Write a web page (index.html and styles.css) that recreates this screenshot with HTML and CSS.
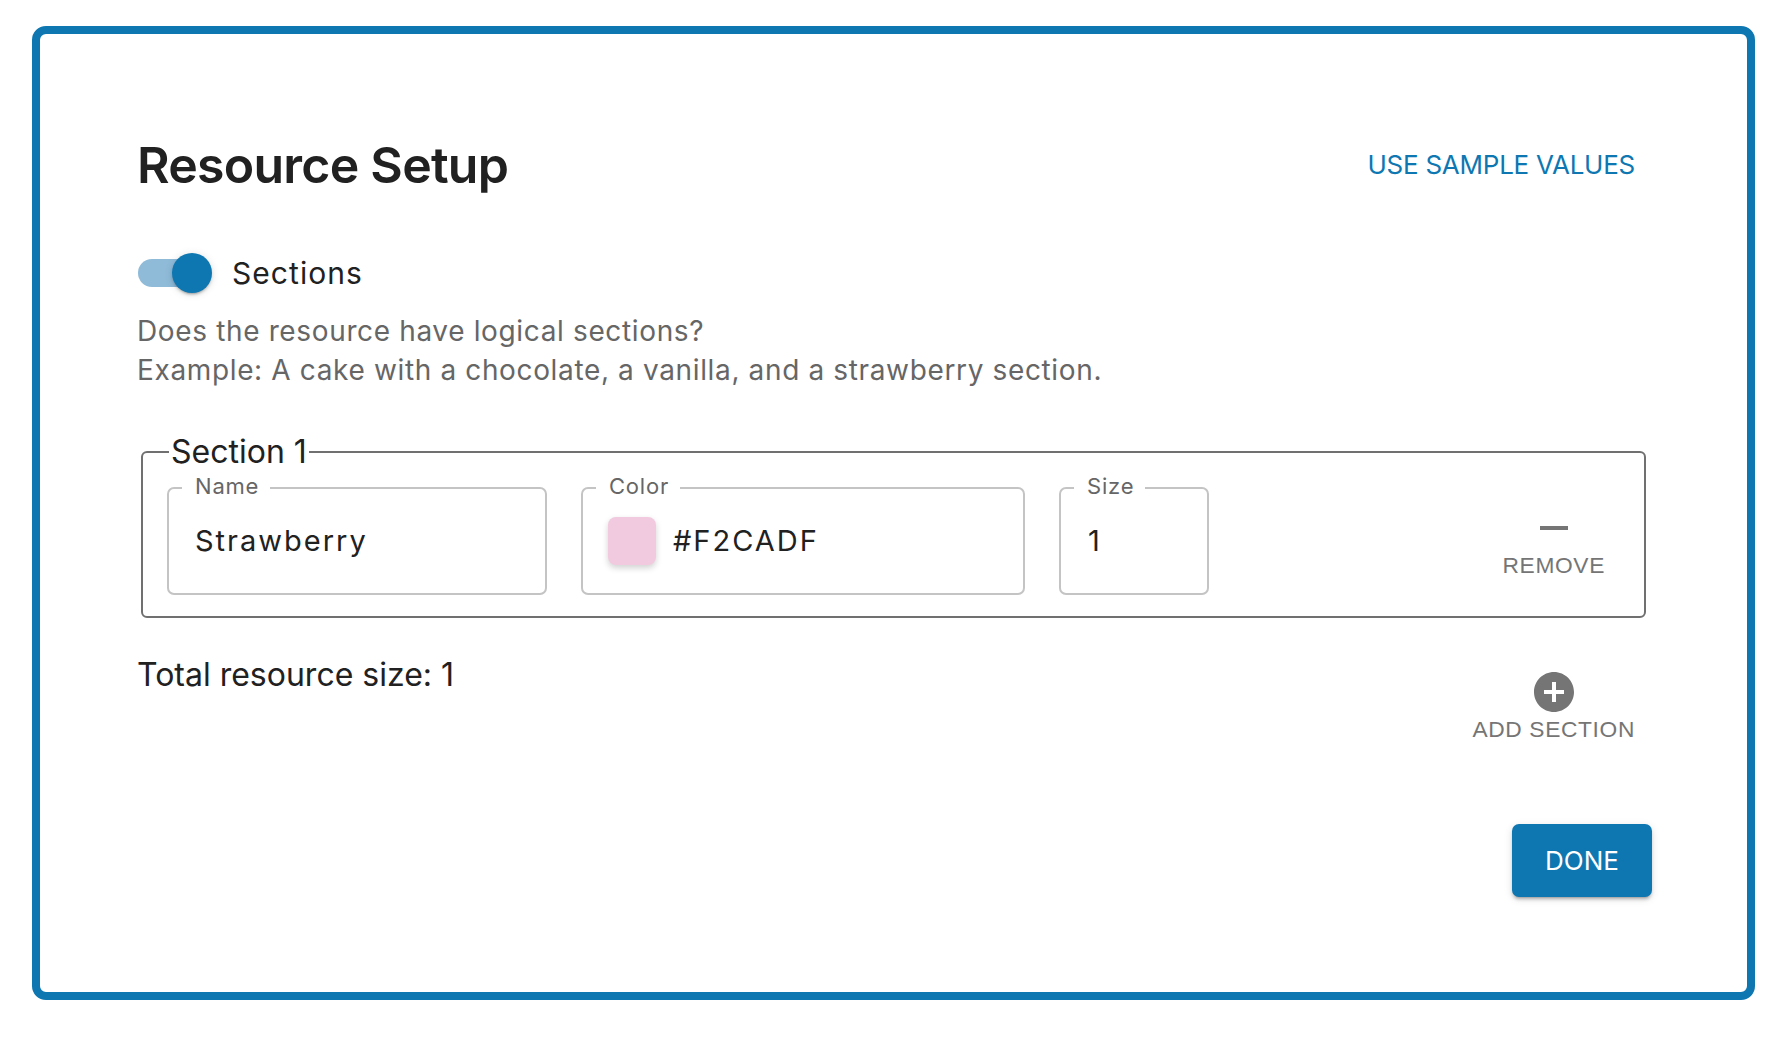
FILE: index.html
```html
<!DOCTYPE html>
<html lang="en">
<head>
<meta charset="utf-8">
<title>Resource Setup</title>
<link rel="stylesheet" href="styles.css">
</head>
<body>
<div class="card">
  <div class="header">
    <h1 class="title">Resource Setup</h1>
    <button class="link-btn" type="button">USE SAMPLE VALUES</button>
  </div>

  <div class="toggle-row">
    <span class="switch"><span class="track"></span><span class="thumb"></span></span>
    <span class="toggle-label">Sections</span>
  </div>

  <div class="desc">
    <p>Does the resource have logical sections?</p>
    <p>Example: A cake with a chocolate, a vanilla, and a strawberry section.</p>
  </div>

  <fieldset class="section">
    <legend>Section 1</legend>
    <div class="fields">
      <div class="field field-name">
        <span class="field-label">Name</span>
        <span class="field-value">Strawberry</span>
      </div>
      <div class="field field-color">
        <span class="field-label">Color</span>
        <span class="swatch"></span>
        <span class="field-value">#F2CADF</span>
      </div>
      <div class="field field-size">
        <span class="field-label">Size</span>
        <span class="field-value">1</span>
      </div>
      <button class="icon-btn remove-btn" type="button">
        <svg viewBox="0 0 24 24" aria-hidden="true"><path d="M19 13H5v-2h14v2z"/></svg>
        <span>REMOVE</span>
      </button>
    </div>
  </fieldset>

  <div class="summary-row">
    <div class="total">Total resource size: 1</div>
    <button class="icon-btn add-btn" type="button">
      <svg viewBox="0 0 24 24" aria-hidden="true"><path d="M12 2C6.48 2 2 6.48 2 12s4.48 10 10 10 10-4.48 10-10S17.520 2 12 2zm5 11h-4v4h-2v-4H7v-2h4V7h2v4h4v2z"/></svg>
      <span>ADD SECTION</span>
    </button>
  </div>

  <div class="actions">
    <button class="done-btn" type="button">DONE</button>
  </div>
</div>
</body>
</html>
```

FILE: styles.css
```css
html, body {
  margin: 0;
  background: #ffffff;
}

body {
  font-family: Inter, "Noto Sans", sans-serif;
  color: #212121;
}

button {
  font-family: inherit;
  background: none;
  border: 0;
  padding: 0;
  margin: 0;
  cursor: pointer;
}

.card {
  box-sizing: border-box;
  height: 974px;
  margin: 26px 31px 0 32px;
  border: 8px solid #0e77b1;
  border-radius: 14px;
  padding: 101px 95px 0 97px;
  background: #ffffff;
}

.header {
  display: flex;
  justify-content: space-between;
  align-items: center;
  height: 60px;
  padding-right: 17px;
}

.title {
  margin: 0;
  font-size: 50px;
  font-weight: 600;
  line-height: 60px;
  letter-spacing: -0.75px;
  color: #212121;
}

.link-btn {
  font-size: 26px;
  font-weight: 400;
  line-height: 32px;
  letter-spacing: -0.25px;
  color: #0e77b1;
}

.toggle-row {
  display: flex;
  align-items: center;
  gap: 20px;
  height: 40px;
  margin-top: 58px;
  padding-left: 1px;
}

.switch {
  position: relative;
  flex: none;
  width: 74px;
  height: 40px;
}

.track {
  position: absolute;
  left: 0;
  top: 6px;
  width: 68px;
  height: 28px;
  border-radius: 14px;
  background: #8fbbd9;
}

.thumb {
  position: absolute;
  right: 0;
  top: 0;
  width: 40px;
  height: 40px;
  border-radius: 50%;
  background: #0e77b1;
  box-shadow: 0 3px 2px -2px rgba(0, 0, 0, 0.2), 0 2px 3px rgba(0, 0, 0, 0.14), 0 1px 8px rgba(0, 0, 0, 0.12);
}

.toggle-label {
  font-size: 30px;
  line-height: 40px;
  letter-spacing: 1.05px;
  color: #212121;
}

.desc {
  margin-top: 19px;
  font-size: 28px;
  line-height: 39px;
  letter-spacing: 0.64px;
  color: #666666;
}

.desc p {
  margin: 0;
}

.section {
  min-width: 0;
  margin: 43px 6px 0 4px;
  padding: 16px 27px 21px 24px;
  border: 2px solid #707070;
  border-radius: 6px;
}

.section legend {
  margin-left: 2px;
  padding: 0 2px;
  font-size: 32px;
  line-height: 38px;
  color: #212121;
}

.fields {
  display: flex;
  align-items: center;
  gap: 34px;
}

.field {
  position: relative;
  box-sizing: border-box;
  flex: none;
  display: flex;
  align-items: center;
  height: 108px;
  padding-left: 26px;
  border: 2px solid #c4c4c4;
  border-radius: 7px;
}

.field-name { width: 380px; }
.field-color { width: 444px; padding-left: 25px; }
.field-size { width: 150px; padding-left: 27px; }

.field-label {
  position: absolute;
  left: 13px;
  top: -16px;
  padding: 0 11px 0 13px;
  background: #ffffff;
  font-size: 22px;
  line-height: 26px;
  letter-spacing: 0.8px;
  color: #666666;
}

.field-value {
  font-size: 29px;
  line-height: 34px;
  letter-spacing: 2px;
  color: #212121;
}

.swatch {
  flex: none;
  width: 48px;
  height: 48px;
  margin-right: 17px;
  border-radius: 8px;
  background: #f2cadf;
  box-shadow: 0 3px 6px rgba(0, 0, 0, 0.18);
}

.icon-btn {
  display: flex;
  flex-direction: column;
  align-items: center;
  font-family: "Liberation Sans", Arial, sans-serif;
  font-size: 22.75px;
  line-height: 26px;
  letter-spacing: 0.65px;
  color: #757575;
}

.icon-btn svg {
  display: block;
  width: 48px;
  height: 48px;
  fill: #757575;
}

.remove-btn {
  margin-left: auto;
  padding: 0 12px;
}

.summary-row {
  display: flex;
  justify-content: space-between;
  align-items: flex-start;
  margin-top: 38px;
  padding-right: 17px;
}

.total {
  font-size: 32px;
  line-height: 38px;
  color: #212121;
}

.add-btn {
  margin-top: 12px;
}

.actions {
  display: flex;
  justify-content: flex-end;
  margin-top: 82px;
}

.done-btn {
  width: 140px;
  height: 73px;
  border-radius: 7px;
  background: #0e77b1;
  color: #ffffff;
  font-size: 26px;
  font-weight: 400;
  box-shadow: 0 4px 2px -3px rgba(0, 0, 0, 0.2), 0 3px 3px rgba(0, 0, 0, 0.14), 0 2px 8px rgba(0, 0, 0, 0.12);
}
```
